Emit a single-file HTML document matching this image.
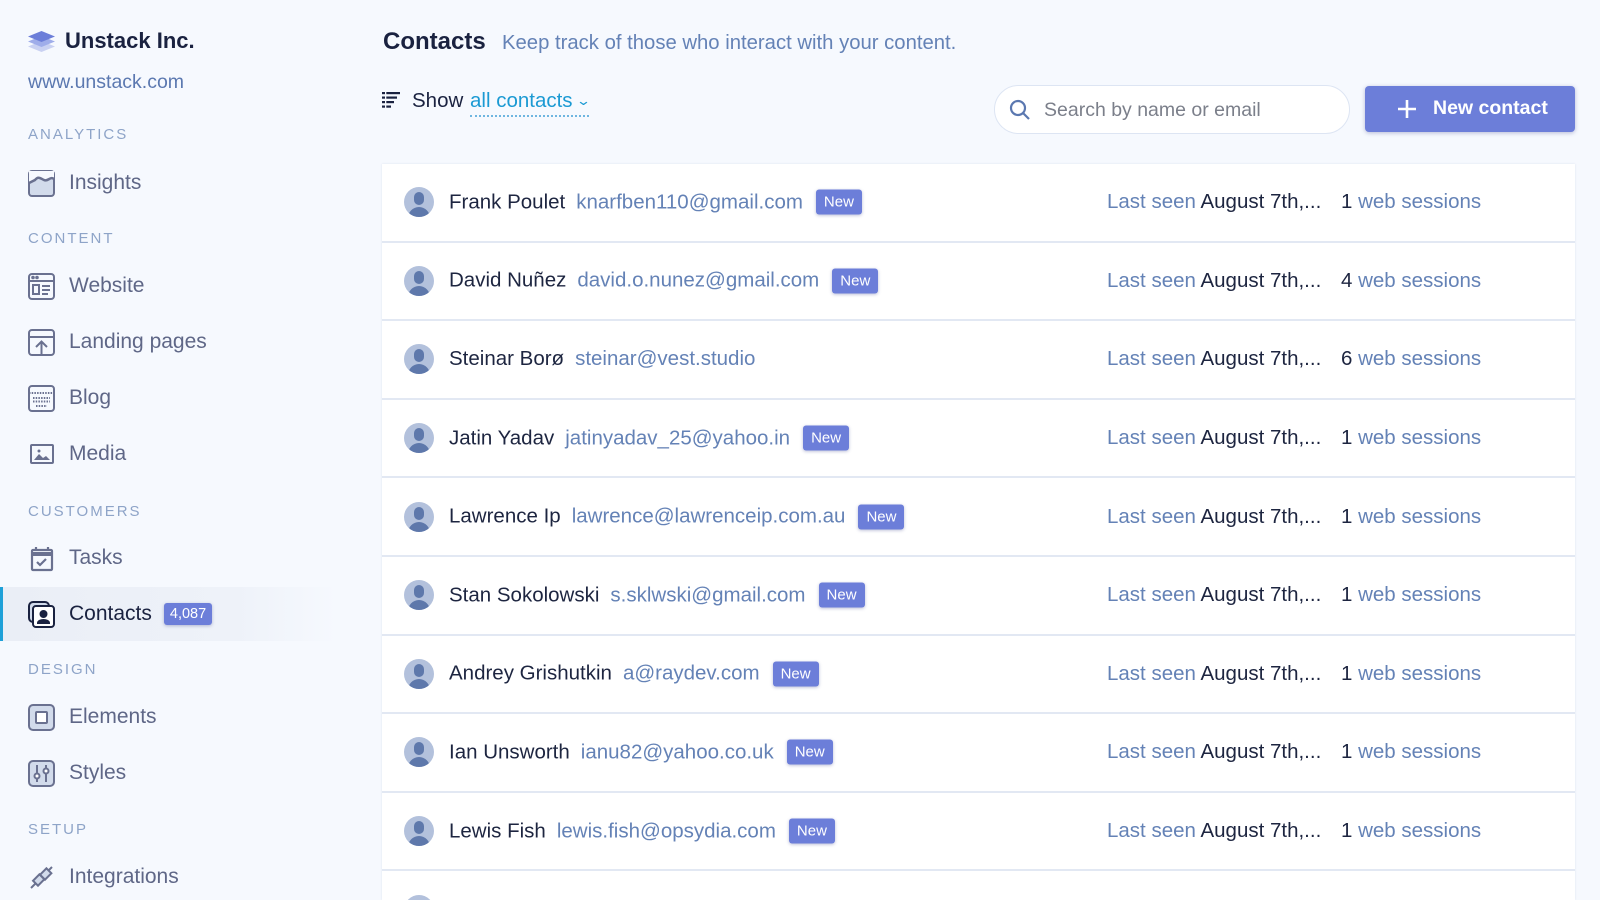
<!DOCTYPE html>
<html style="overflow:hidden;width:1600px;height:900px"><head><meta charset="utf-8"><style>
*{margin:0;padding:0;box-sizing:border-box}
body{width:1600px;height:900px;overflow:hidden;background:#f6f9fe;font-family:"Liberation Sans",Arial,sans-serif;position:relative}
.a{position:absolute;white-space:nowrap}
.sec{position:absolute;left:28px;font-size:15px;letter-spacing:2px;color:#8ea4c8}
.item{position:absolute;left:28px;height:28px;display:flex;align-items:center;font-size:21px;color:#5f6787}
.item svg{width:27px;height:27px;margin-right:14px}
.card{position:absolute;left:382px;top:164px;width:1193px;height:736px;background:#fff;box-shadow:0 0 2px rgba(80,100,160,.15);overflow:hidden}
.row{position:absolute;left:0;width:1193px;height:78.6px;border-bottom:2px solid #e2e8f3;font-size:20.5px}
.row>*{position:absolute;top:50%;transform:translateY(-50%)}
.av{left:22px;width:30px;height:30px;border-radius:50%;background:#b3c1dc;overflow:hidden}
.nm{left:67px;color:#1d2540;display:flex;align-items:center}
.nm .em{color:#6482b6;margin-left:11px}
.nw{margin-left:13px;background:#6c7ed9;color:#fff;font-size:15px;padding:4px 8px;border-radius:3px;box-shadow:0 1px 3px rgba(60,70,140,.35)}
.ls{left:725px;color:#6482b6}.ls b{font-weight:normal;color:#1d2540}
.ws{left:959px;color:#6482b6}.ws b{font-weight:normal;color:#1d2540}
</style></head><body>
<svg class="a" style="left:28px;top:30px" width="27" height="24" viewBox="0 0 27 24"><path d="M13.5 11 L27 16.5 L13.5 22 L0 16.5Z" fill="#c9d1f2"/><path d="M13.5 6 L27 11.5 L13.5 17 L0 11.5Z" fill="#9fadea"/><path d="M13.5 1 L27 6.5 L13.5 12 L0 6.5Z" fill="#6c7ed9"/></svg>
<div class="a" style="left:65px;top:28px;font-size:22px;font-weight:bold;color:#1a2240">Unstack Inc.</div>
<div class="a" style="left:28px;top:71px;font-size:19.5px;color:#5b78b0">www.unstack.com</div>

<div class="sec" style="top:126px">ANALYTICS</div>
<div class="item" style="top:169px"><svg viewBox="0 0 27 27"><rect x="1" y="1" width="25" height="25" rx="3" fill="#d2dbeb" stroke="#6a7190" stroke-width="2"/><path d="M1 1h25v8c-4-3-6 3-10 1s-6-4-9 0l-6 3z" fill="#f6f9fe"/><path d="M1 13l6-3c3-4 5-2 9 0s6-4 10-1" fill="none" stroke="#6a7190" stroke-width="2.5"/></svg>Insights</div>

<div class="sec" style="top:230px">CONTENT</div>
<div class="item" style="top:272px"><svg viewBox="0 0 27 27" fill="none" stroke="#6a7190" stroke-width="2"><rect x="1" y="1" width="25" height="25" rx="3"/><path d="M1 8h25"/><path d="M5 12h6v9H5zM14 13h8M14 17h8M14 21h6"/><circle cx="5" cy="4.5" r=".8" fill="#6a7190"/><circle cx="9" cy="4.5" r=".8" fill="#6a7190"/></svg>Website</div>
<div class="item" style="top:328px"><svg viewBox="0 0 27 27" fill="none" stroke="#6a7190" stroke-width="2"><rect x="1" y="1" width="25" height="25" rx="3"/><path d="M1 8h25M13.5 26V13M8 18l5.5-5.5L19 18"/></svg>Landing pages</div>
<div class="item" style="top:384px"><svg viewBox="0 0 27 27" fill="none" stroke="#6a7190" stroke-width="2"><rect x="1" y="1" width="25" height="25" rx="3"/><path d="M1 8h25M5 13h17M5 16.5h17M8 21h11" stroke-dasharray="1.5 1.2"/></svg>Blog</div>
<div class="item" style="top:440px"><svg viewBox="0 0 27 27" fill="none" stroke="#6a7190" stroke-width="2"><rect x="3" y="4" width="22" height="18" rx="1"/><path d="M6 19l5-6 4 4 3-2 4 4z" fill="#6a7190" stroke="none"/><circle cx="11" cy="10" r="1.5" fill="#6a7190" stroke="none"/></svg>Media</div>

<div class="sec" style="top:503px">CUSTOMERS</div>
<div class="item" style="top:544px"><svg viewBox="0 0 27 27" fill="none" stroke="#6a7190" stroke-width="2.2"><rect x="4" y="5" width="20" height="20" rx="1"/><path d="M4 9h20" stroke-width="4"/><path d="M8 2v4M20 2v4M9 17l3 3 6-6"/></svg>Tasks</div>
<div class="a" style="left:0;top:587px;width:337px;height:54px;background:linear-gradient(90deg,#eaeef6,#eef2f9 70%,#f6f9fe)"></div>
<div class="a" style="left:0;top:587px;width:3px;height:54px;background:#1ea0d8"></div>
<div class="item" style="top:600px;color:#1a2240"><svg viewBox="0 0 27 27" fill="none" stroke="#1a2240" stroke-width="2"><rect x="1" y="1" width="20" height="20" rx="4" fill="#d2dbeb"/><rect x="5" y="5" width="21" height="21" rx="3" fill="#fff"/><circle cx="15.5" cy="13" r="3" fill="#1a2240"/><path d="M10 22c0-4 11-4 11 0z" fill="#1a2240"/></svg>Contacts<span style="margin-left:12px;background:#6c7ed9;color:#fff;font-size:14.5px;padding:3px 6px;border-radius:3px;box-shadow:0 1px 3px rgba(60,70,140,.35)">4,087</span></div>

<div class="sec" style="top:661px">DESIGN</div>
<div class="item" style="top:703px"><svg viewBox="0 0 27 27" fill="none" stroke="#6a7190" stroke-width="2"><rect x="1" y="1" width="25" height="25" rx="4" fill="#d2dbeb"/><rect x="8" y="8" width="11" height="11" rx="1" fill="#fff"/></svg>Elements</div>
<div class="item" style="top:759px"><svg viewBox="0 0 27 27" fill="none" stroke="#6a7190" stroke-width="2"><rect x="1" y="1" width="25" height="25" rx="4" fill="#d2dbeb"/><path d="M9 5v17M18 5v17"/><circle cx="9" cy="16" r="2.5" fill="#fff"/><circle cx="18" cy="11" r="2.5" fill="#fff"/></svg>Styles</div>

<div class="sec" style="top:821px">SETUP</div>
<div class="item" style="top:863px"><svg viewBox="0 0 27 27" fill="#d2dbeb" stroke="#6a7190" stroke-width="2"><path d="M3 24l5-5M24 3l-5 5"/><rect x="6" y="13" width="9" height="7" transform="rotate(-45 10 16)"/><rect x="13" y="7" width="9" height="7" transform="rotate(-45 17 10)"/></svg>Integrations</div>

<div class="a" style="left:383px;top:28px;font-size:24px;color:#1a2240;font-weight:bold">Contacts</div>
<div class="a" style="left:502px;top:32px;font-size:20.3px;color:#6482b6">Keep track of those who interact with your content.</div>

<svg class="a" style="left:382px;top:92px" width="18" height="17" viewBox="0 0 18 17" fill="#1a2240"><rect x="0" y="0" width="18" height="2.2"/><rect x="0" y="4.5" width="15" height="2.2"/><rect x="0" y="9" width="12" height="2.2"/><rect x="0" y="13.5" width="9" height="2.2"/><rect x="3" y="0" width="1.3" height="16" fill="#f6f9fe"/></svg>
<div class="a" style="left:412px;top:89px;font-size:20.5px;color:#1a2240">Show</div>
<div class="a" style="left:470px;top:89px;font-size:20.5px;color:#1b9ad3;border-bottom:2px dotted #6fb6e0;padding-bottom:2px">all contacts <span style="font-size:13px;display:inline-block;transform:scaleX(1.4) translateY(-2px)">⌄</span></div>

<div class="a" style="left:994px;top:85px;width:356px;height:49px;border:1.5px solid #dde5f3;border-radius:25px;background:#fff"></div>
<svg class="a" style="left:1009px;top:99px" width="22" height="22" viewBox="0 0 22 22" fill="none" stroke="#5b78b0" stroke-width="2.2"><circle cx="9" cy="9" r="7"/><path d="M14 14l6 6"/></svg>
<div class="a" style="left:1044px;top:99px;font-size:19.5px;color:#7b7f8a">Search by name or email</div>

<div class="a" style="left:1365px;top:86px;width:210px;height:46px;background:#6c7ed9;border-radius:4px;box-shadow:0 1px 4px rgba(60,70,140,.35)"></div>
<svg class="a" style="left:1398px;top:100px" width="18" height="18" viewBox="0 0 18 18" stroke="#fff" stroke-width="2.6"><path d="M9 0v18M0 9h18"/></svg>
<div class="a" style="left:1433px;top:97px;font-size:19.5px;color:#fff;font-weight:bold">New contact</div>

<div class="card">
<div class="row" style="top:0"><div class="av"></div><div class="nm">Frank Poulet<span class="em">knarfben110@gmail.com</span><span class="nw">New</span></div><div class="ls">Last seen <b>August 7th,...</b></div><div class="ws"><b>1</b> web sessions</div></div>
<div class="row" style="top:78.6px"><div class="av"></div><div class="nm">David Nuñez<span class="em">david.o.nunez@gmail.com</span><span class="nw">New</span></div><div class="ls">Last seen <b>August 7th,...</b></div><div class="ws"><b>4</b> web sessions</div></div>
<div class="row" style="top:157.2px"><div class="av"></div><div class="nm">Steinar Borø<span class="em">steinar@vest.studio</span></div><div class="ls">Last seen <b>August 7th,...</b></div><div class="ws"><b>6</b> web sessions</div></div>
<div class="row" style="top:235.8px"><div class="av"></div><div class="nm">Jatin Yadav<span class="em">jatinyadav_25@yahoo.in</span><span class="nw">New</span></div><div class="ls">Last seen <b>August 7th,...</b></div><div class="ws"><b>1</b> web sessions</div></div>
<div class="row" style="top:314.4px"><div class="av"></div><div class="nm">Lawrence Ip<span class="em">lawrence@lawrenceip.com.au</span><span class="nw">New</span></div><div class="ls">Last seen <b>August 7th,...</b></div><div class="ws"><b>1</b> web sessions</div></div>
<div class="row" style="top:393px"><div class="av"></div><div class="nm">Stan Sokolowski<span class="em">s.sklwski@gmail.com</span><span class="nw">New</span></div><div class="ls">Last seen <b>August 7th,...</b></div><div class="ws"><b>1</b> web sessions</div></div>
<div class="row" style="top:471.6px"><div class="av"></div><div class="nm">Andrey Grishutkin<span class="em">a@raydev.com</span><span class="nw">New</span></div><div class="ls">Last seen <b>August 7th,...</b></div><div class="ws"><b>1</b> web sessions</div></div>
<div class="row" style="top:550.2px"><div class="av"></div><div class="nm">Ian Unsworth<span class="em">ianu82@yahoo.co.uk</span><span class="nw">New</span></div><div class="ls">Last seen <b>August 7th,...</b></div><div class="ws"><b>1</b> web sessions</div></div>
<div class="row" style="top:628.8px"><div class="av"></div><div class="nm">Lewis Fish<span class="em">lewis.fish@opsydia.com</span><span class="nw">New</span></div><div class="ls">Last seen <b>August 7th,...</b></div><div class="ws"><b>1</b> web sessions</div></div>
<div class="row" style="top:707.4px"><div class="av"></div></div>
</div>
<style>.av::before{content:"";position:absolute;left:10px;top:5px;width:10px;height:13px;border-radius:5px;background:#5e78ab}.av::after{content:"";position:absolute;left:4px;top:20px;width:22px;height:14px;border-radius:11px 11px 0 0;background:#5e78ab}</style>
</body></html>
